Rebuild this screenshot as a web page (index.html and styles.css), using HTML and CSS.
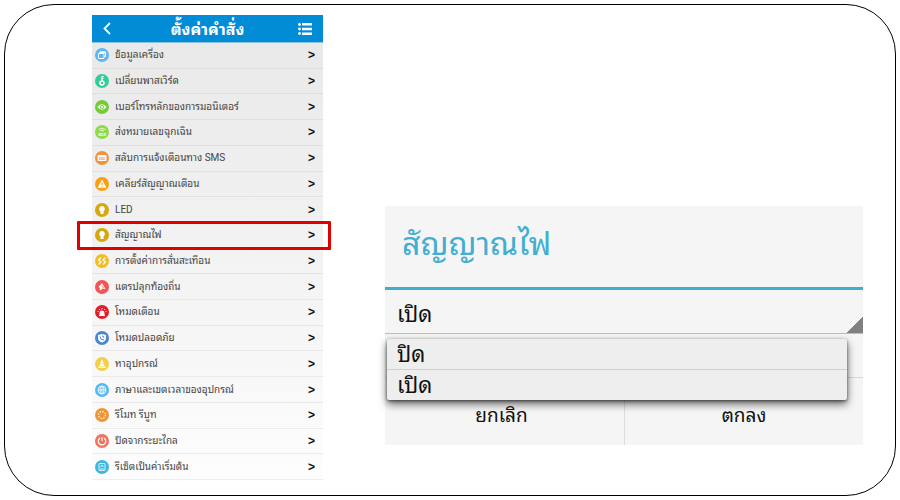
FILE: index.html
```html
<!DOCTYPE html>
<html lang="th">
<head>
  <meta charset="UTF-8" />
  <meta name="viewport" content="width=device-width, initial-scale=1.0"/>
  <title>ตั้งค่าคำสั่ง</title>
  <link rel="stylesheet" href="styles.css">
</head>
<body>

  <main class="frame">

    <section class="phone">
      <header class="topbar">
        <button class="icon-btn" type="button" aria-label="ย้อนกลับ">
          <svg width="8" height="13" viewBox="0 0 8 13"><path d="M7 1 1.500 6.500 7 12" fill="none" stroke="#fff" stroke-width="1.800"/></svg>
        </button>
        <h1>ตั้งค่าคำสั่ง</h1>
        <button class="icon-btn" type="button" aria-label="เมนู">
          <svg width="14" height="12" viewBox="0 0 14 12" fill="#fff"><circle cx="1.500" cy="1.500" r="1.400"/><circle cx="1.500" cy="6" r="1.400"/><circle cx="1.500" cy="10.500" r="1.400"/><path d="M4 0h10v2.600H4zM4 4.700h10v2.600H4zM4 9.400h10v2.600H4z"/></svg>
        </button>
      </header>

      <nav class="menu">
        <a class="row" href="#info">
          <svg class="icon" viewBox="0 0 28 28"><circle cx="14" cy="14" r="14" fill="#5cb8f0"/><path d="M10 11V8h11v9h-3" fill="none" stroke="#fff" stroke-width="2"/><rect x="7" y="11" width="11" height="10" rx="1" fill="none" stroke="#fff" stroke-width="2"/><path d="M8 10l3-3h10l-3 4z" fill="#fff"/></svg>
          <span>ข้อมูลเครื่อง</span>
        </a>
        <a class="row" href="#password">
          <svg class="icon" viewBox="0 0 28 28"><circle cx="14" cy="14" r="14" fill="#36cc96"/><circle cx="14" cy="18" r="4" fill="none" stroke="#fff" stroke-width="3"/><path d="M14 15V5h4M14 9h3" fill="none" stroke="#fff" stroke-width="2.400"/></svg>
          <span>เปลี่ยนพาสเวิร์ด</span>
        </a>
        <a class="row" href="#monitor">
          <svg class="icon" viewBox="0 0 28 28"><circle cx="14" cy="14" r="14" fill="#76cc38"/><path d="M5 14q9-11 18 0-9 11-18 0z" fill="#fff"/><circle cx="14" cy="14" r="4" fill="#76cc38"/><circle cx="14" cy="14" r="2" fill="#fff"/></svg>
          <span>เบอร์โทรหลักของการมอนิเตอร์</span>
        </a>
        <a class="row" href="#sos">
          <svg class="icon" viewBox="0 0 28 28"><circle cx="14" cy="14" r="14" fill="#92d84a"/><path d="M7 9q7-5 14 0M10 12q4-3 8 0" fill="none" stroke="#fff" stroke-width="1.600"/><text class="glyph" x="14" y="22" fill="#fff">SOS</text></svg>
          <span>ส่งหมายเลขฉุกเฉิน</span>
        </a>
        <a class="row" href="#sms">
          <svg class="icon" viewBox="0 0 28 28"><circle cx="14" cy="14" r="14" fill="#f09440"/><rect x="5" y="8" width="18" height="12" rx="2" fill="#fff"/><text class="glyph small" x="14" y="17" fill="#f09440">SOS</text></svg>
          <span>สลับการแจ้งเตือนทาง SMS</span>
        </a>
        <a class="row" href="#clear">
          <svg class="icon" viewBox="0 0 28 28"><circle cx="14" cy="14" r="14" fill="#f99e0c"/><path d="M14 6l8 15H6z" fill="#fff" stroke="#fff" stroke-linejoin="round"/><path d="M14 11v5M14 17.500v2" stroke="#f99e0c" stroke-width="2"/></svg>
          <span>เคลียร์สัญญาณเตือน</span>
        </a>
        <a class="row" href="#led">
          <svg class="icon" viewBox="0 0 28 28"><circle cx="14" cy="14" r="14" fill="#d6a70e"/><path d="M14 6a6 6 0 0 1 3 11v5h-6v-5a6 6 0 0 1 3-11z" fill="#fff"/></svg>
          <span>LED</span>
        </a>
        <a class="row selected" href="#light">
          <svg class="icon" viewBox="0 0 28 28"><circle cx="14" cy="14" r="14" fill="#d6a70e"/><path d="M14 6a6 6 0 0 1 3 11v5h-6v-5a6 6 0 0 1 3-11z" fill="#fff"/></svg>
          <span>สัญญาณไฟ</span>
        </a>
        <a class="row" href="#vibration">
          <svg class="icon" viewBox="0 0 28 28"><circle cx="14" cy="14" r="14" fill="#f2bd24"/><path d="M12 7l-5 5 5 4-5 5M21 7l-5 5 5 4-5 5" fill="none" stroke="#fff" stroke-width="2.400"/></svg>
          <span>การตั้งค่าการสั่นสะเทือน</span>
        </a>
        <a class="row" href="#horn">
          <svg class="icon" viewBox="0 0 28 28"><circle cx="14" cy="14" r="14" fill="#f05454"/><path d="M14 6l7 12-7-1-2 4-3-2 1-3-3-2z" fill="#fff"/><path d="M14 11l3 5" stroke="#f05454" stroke-width="1.600"/></svg>
          <span>แตรปลุกท้องถิ่น</span>
        </a>
        <a class="row" href="#alarm">
          <svg class="icon" viewBox="0 0 28 28"><circle cx="14" cy="14" r="14" fill="#e02028"/><path d="M9 20v-4a5 5 0 0 1 10 0v4h1v2H8v-2z" fill="#fff"/><path d="M14 6v3M8 8l2 2M20 8l-2 2M5 13h2M21 13h2" stroke="#fff" stroke-width="1.800"/></svg>
          <span>โหมดเตือน</span>
        </a>
        <a class="row" href="#safe">
          <svg class="icon" viewBox="0 0 28 28"><circle cx="14" cy="14" r="14" fill="#4a84d8"/><path d="M14 6l8 2v6q0 6-8 9-8-3-8-9V8z" fill="#fff"/><path d="M10 11q0 7 8 7M14 10q4 0 4 4" fill="none" stroke="#4a84d8" stroke-width="2"/></svg>
          <span>โหมดปลอดภัย</span>
        </a>
        <a class="row" href="#find">
          <svg class="icon" viewBox="0 0 28 28"><circle cx="14" cy="14" r="14" fill="#f2d04c"/><path d="M13 6h2l4 12H9zM7 19h14v3H7z" fill="#fff"/><path d="M11 14h6" stroke="#f2d04c" stroke-width="1.500"/></svg>
          <span>หาอุปกรณ์</span>
        </a>
        <a class="row" href="#language">
          <svg class="icon" viewBox="0 0 28 28"><circle cx="14" cy="14" r="14" fill="#58b8f0"/><g fill="none" stroke="#fff" stroke-width="1.600"><circle cx="14" cy="14" r="8"/><ellipse cx="14" cy="14" rx="4" ry="8"/><path d="M6 14h16M14 6v16"/></g></svg>
          <span>ภาษาและเขตเวลาของอุปกรณ์</span>
        </a>
        <a class="row" href="#reboot">
          <svg class="icon" viewBox="0 0 28 28"><circle cx="14" cy="14" r="14" fill="#f09434"/><circle cx="14" cy="14" r="7" fill="none" stroke="#fff" stroke-width="2.800" stroke-dasharray="2.600 2.900"/></svg>
          <span>รีโมท รีบูท</span>
        </a>
        <a class="row" href="#shutdown">
          <svg class="icon" viewBox="0 0 28 28"><circle cx="14" cy="14" r="14" fill="#ee7460"/><path d="M10 8a7.500 7.500 0 1 0 8 0M14 6v8" fill="none" stroke="#fff" stroke-width="2.400"/></svg>
          <span>ปิดจากระยะไกล</span>
        </a>
        <a class="row" href="#reset">
          <svg class="icon" viewBox="0 0 28 28"><circle cx="14" cy="14" r="14" fill="#3cb8e0"/><rect x="8" y="7" width="12" height="14" rx="1" fill="none" stroke="#fff" stroke-width="1.600"/><path d="M11 14l3-4 3 4M10 18h8" fill="none" stroke="#fff" stroke-width="1.600"/></svg>
          <span>รีเซ็ตเป็นค่าเริ่มต้น</span>
        </a>
      </nav>
    </section>

    <form class="dialog">
      <h2><label for="light">สัญญาณไฟ</label></h2>
      <div class="spinner">
        <select id="light" name="light">
          <option>ปิด</option>
          <option selected>เปิด</option>
        </select>
        <div class="dropdown">
          <button type="button">ปิด</button>
          <button type="button">เปิด</button>
        </div>
      </div>
      <div class="actions">
        <button type="button">ยกเลิก</button>
        <button type="submit">ตกลง</button>
      </div>
    </form>

  </main>

</body>
</html>
```
FILE: styles.css
```css
* {
  box-sizing: border-box;
}

body {
  margin: 0;
  padding: 4px;
  background: #fff;
  font-family: Roboto, "Noto Sans Thai Looped", "Droid Sans Thai", Loma, Waree, Garuda, Tahoma, sans-serif;
}

button, select {
  font-family: inherit;
  border: none;
  background: none;
  padding: 0;
  cursor: pointer;
}

.frame {
  display: grid;
  grid-template-columns: 231fr 478fr;
  column-gap: 62px;
  min-height: calc(100vh - 8px);
  padding: 10px 32px 15px 87px;
  border: 1px solid #000;
  border-radius: 50px;
}

/* command list */
.phone {
  display: flex;
  flex-direction: column;
}

.topbar {
  display: flex;
  align-items: center;
  justify-content: space-between;
  height: 28px;
  padding: 0 11px;
  background: #028cd6;
  border-bottom: 1px solid #8cc4e4;
}

.topbar h1 {
  margin: 0;
  padding: 2px 0 0 6px;
  color: #fff;
  font-size: 16px;
  font-weight: 700;
  line-height: 26px;
}

.icon-btn {
  display: flex;
}

.menu {
  flex: 1;
  display: grid;
  grid-auto-rows: 1fr;
  background: linear-gradient(#e9e9e9, #fdfdfd);
}

.row {
  position: relative;
  display: flex;
  align-items: center;
  gap: 6px;
  padding: 0 8px 0 3px;
  border-bottom: 1px solid rgba(0, 0, 0, 0.06);
  color: #444;
  font-size: 10px;
  line-height: 16px;
  text-decoration: none;
}

.row::after {
  content: ">";
  margin-left: auto;
  color: #111;
  font-family: "Liberation Sans", sans-serif;
  font-size: 12px;
  font-weight: 700;
}

.row.selected::before {
  content: "";
  position: absolute;
  inset: -2px -8px -2px -15px;
  border: 3px solid #e00000;
  border-radius: 1px;
}

.icon {
  width: 14px;
  height: 14px;
}

.glyph {
  font-size: 8px;
  font-weight: 700;
  text-anchor: middle;
}

.glyph.small {
  font-size: 6px;
}

/* signal light dialog */
.dialog {
  align-self: end;
  margin-bottom: 35px;
  background: #f5f5f5;
}

.dialog h2 {
  margin: 0;
  padding: 14px 17px 19px;
  border-bottom: 3px solid #3fadcc;
  color: #42aed0;
  font-size: 32px;
  font-weight: 400;
  line-height: 48px;
}

.spinner {
  position: relative;
  padding-bottom: 43px;
  border-bottom: 1px solid #d8d8d8;
}

.spinner select {
  display: block;
  width: 100%;
  height: 44px;
  padding: 6px 12px 0;
  appearance: none;
  border-bottom: 1px solid #bcbcbc;
  border-radius: 0;
  background: linear-gradient(135deg, transparent 50%, #808080 50%) right bottom / 16px 16px no-repeat;
  color: #111;
  font-size: 22px;
}

.dropdown {
  position: absolute;
  top: 49px;
  left: 2px;
  right: 16px;
  background: #eee;
  border-radius: 2px;
  box-shadow: 0 4px 8px rgba(0, 0, 0, 0.6), 0 1px 3px rgba(0, 0, 0, 0.5);
}

.dropdown button {
  display: block;
  width: 100%;
  height: 30px;
  padding: 0 10px;
  color: #111;
  font-size: 22px;
  line-height: 32px;
  text-align: left;
}

.dropdown button + button {
  height: 31px;
  border-top: 1px solid #d0d0d0;
}

.actions {
  display: grid;
  grid-template-columns: 1fr 1fr;
}

.actions button {
  height: 67px;
  padding: 4px 6px 0 0;
  color: #111;
  font-size: 19px;
}

.actions button + button {
  padding-right: 0;
  border-left: 1px solid #dcdcdc;
}
```
